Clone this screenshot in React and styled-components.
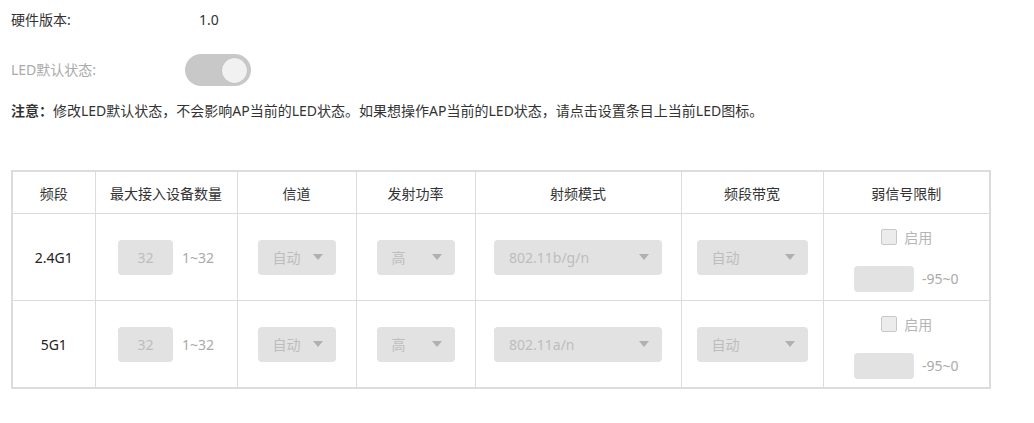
import React from "react";
import styled, { createGlobalStyle } from "styled-components";

const Global = createGlobalStyle`
  html, body { margin: 0; padding: 0; background: #fff; }
  body {
    font-family: "Noto Sans", "Noto Sans CJK SC", sans-serif;
    font-size: 14px;
    color: #333;
  }
`;

const Page = styled.div`
  padding: 8px 11px 0 11px;
  width: 979px;
`;

const InfoRow = styled.div`
  display: flex;
  align-items: center;
  height: ${(p) => p.$h || 24}px;
  margin-top: ${(p) => p.$mt || 0}px;
`;

const Label = styled.div`
  width: 174px;
  color: ${(p) => (p.$disabled ? "#aaa" : "#333")};
  line-height: 20px;
`;

const Value = styled.div`
  padding-left: 14px;
  line-height: 20px;
`;

const Toggle = styled.div`
  width: 66px;
  height: 32px;
  border-radius: 16px;
  background: #c8c8c8;
  display: flex;
  align-items: center;
  justify-content: flex-end;
  padding-right: 4px;
  box-sizing: border-box;
`;

const Knob = styled.div`
  width: 25px;
  height: 25px;
  border-radius: 50%;
  background: #f1f1f1;
  box-shadow: 0 0 1px rgba(0, 0, 0, 0.15);
`;

const Note = styled.div`
  margin-top: 15px;
  line-height: 20px;
  font-size: 14px;
  white-space: nowrap;
`;

const Strong = styled.strong`
  font-weight: 700;
`;

const Table = styled.table`
  margin-top: 49px;
  width: 978px;
  table-layout: fixed;
  border-collapse: collapse;
  border: 2px solid #dcdcdc;
`;

const Th = styled.th`
  height: 41px;
  font-weight: 400;
  color: #333;
  border: 1px solid #dcdcdc;
  text-align: center;
  vertical-align: middle;
  padding: 0;
`;

const Td = styled.td`
  height: 86px;
  border: 1px solid #dcdcdc;
  text-align: center;
  vertical-align: middle;
  padding: 0;
`;

const Band = styled.span`
  color: #222;
`;

const Inline = styled.div`
  display: flex;
  align-items: center;
  justify-content: center;
  gap: ${(p) => p.$gap || 9}px;
`;

const InputBox = styled.div`
  width: ${(p) => p.$w}px;
  height: ${(p) => p.$h || 35}px;
  border-radius: 4px;
  background: #e2e2e2;
  color: #bdbdbd;
  display: flex;
  align-items: center;
  justify-content: center;
  box-sizing: border-box;
`;

const Hint = styled.span`
  color: #aaa;
`;

const Select = styled.div`
  width: ${(p) => p.$w}px;
  height: 35px;
  margin: 0 auto;
  border-radius: 4px;
  background: #e2e2e2;
  color: #bdbdbd;
  display: flex;
  align-items: center;
  justify-content: space-between;
  padding: 0 13px 0 15px;
  box-sizing: border-box;
`;

const Arrow = styled.span`
  width: 0;
  height: 0;
  border-left: 5px solid transparent;
  border-right: 5px solid transparent;
  border-top: 6px solid #b0b0b0;
`;

const Weak = styled.div`
  display: flex;
  flex-direction: column;
  align-items: center;
  gap: 21px;
  padding-top: 6px;
`;

const CheckLine = styled.label`
  display: flex;
  align-items: center;
  gap: 7px;
  color: #b5b5b5;
  height: 16px;
  padding-left: 1px;
`;

const Check = styled.span`
  width: 14px;
  height: 14px;
  border: 1px solid #c8c8c8;
  border-radius: 2px;
  background: #ececec;
`;

const columns = [
  { t: "频段", w: 83 },
  { t: "最大接入设备数量", w: 142 },
  { t: "信道", w: 119 },
  { t: "发射功率", w: 119 },
  { t: "射频模式", w: 206 },
  { t: "频段带宽", w: 142 },
  { t: "弱信号限制", w: 167 },
];

const rows = [
  { band: "2.4G1", mode: "802.11b/g/n" },
  { band: "5G1", mode: "802.11a/n" },
];

export default function App() {
  return (
    <>
      <Global />
      <Page>
        <InfoRow>
          <Label>硬件版本:</Label>
          <Value>1.0</Value>
        </InfoRow>
        <InfoRow $h={32} $mt={22}>
          <Label $disabled>LED默认状态:</Label>
          <Toggle>
            <Knob />
          </Toggle>
        </InfoRow>
        <Note>
          <Strong>注意：</Strong>修改LED默认状态，不会影响AP当前的LED状态。如果想操作AP当前的LED状态，请点击设置条目上当前LED图标。
        </Note>
        <Table>
          <colgroup>
            {columns.map((c) => (
              <col key={c.t} style={{ width: c.w }} />
            ))}
          </colgroup>
          <thead>
            <tr>
              {columns.map((c) => (
                <Th key={c.t}>{c.t}</Th>
              ))}
            </tr>
          </thead>
          <tbody>
            {rows.map((r) => (
              <tr key={r.band}>
                <Td>
                  <Band>{r.band}</Band>
                </Td>
                <Td>
                  <Inline>
                    <InputBox $w={55}>32</InputBox>
                    <Hint>1~32</Hint>
                  </Inline>
                </Td>
                <Td>
                  <Select $w={78}>
                    <span>自动</span>
                    <Arrow />
                  </Select>
                </Td>
                <Td>
                  <Select $w={78}>
                    <span>高</span>
                    <Arrow />
                  </Select>
                </Td>
                <Td>
                  <Select $w={168}>
                    <span>{r.mode}</span>
                    <Arrow />
                  </Select>
                </Td>
                <Td>
                  <Select $w={111}>
                    <span>自动</span>
                    <Arrow />
                  </Select>
                </Td>
                <Td>
                  <Weak>
                    <CheckLine>
                      <Check />
                      启用
                    </CheckLine>
                    <Inline $gap={8}>
                      <InputBox $w={60} $h={26} />
                      <Hint>-95~0</Hint>
                    </Inline>
                  </Weak>
                </Td>
              </tr>
            ))}
          </tbody>
        </Table>
      </Page>
    </>
  );
}
